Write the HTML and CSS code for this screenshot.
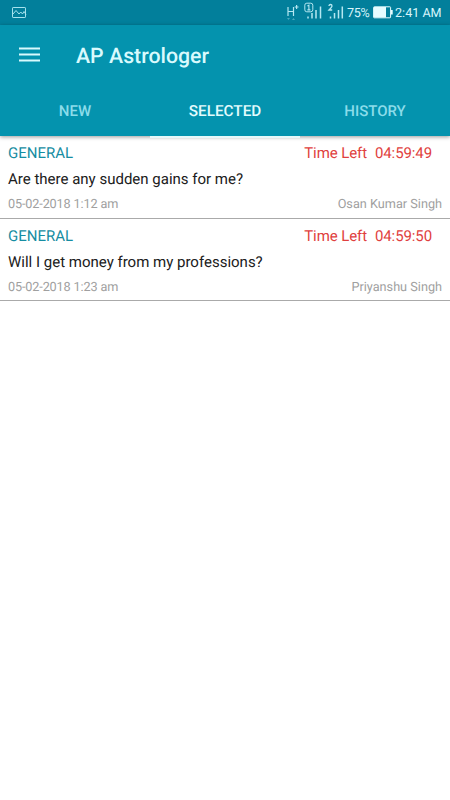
FILE: index.html
```html
<!DOCTYPE html>
<html lang="en">
<head>
<meta charset="utf-8">
<title>AP Astrologer</title>
<link rel="stylesheet" href="styles.css">
</head>
<body>
<div class="status">
  <svg class="photo" width="15" height="13" viewBox="0 0 15 13" fill="none" stroke="currentColor" stroke-width="1"><rect x=".5" y="1.500" width="13" height="10" rx=".6"/><path d="M1 8l3-3.500 3 3.500 1.800-2 1.700 2L12 5.500l2 3"/></svg>
  <svg class="signals" width="63" height="25" viewBox="0 0 63 25" fill="none" stroke="currentColor">
    <path d="M4 7v9M9.500 7v9M4 11.500h5.500M10.700 7h3.800M12.600 5.100v3.800" stroke-width="1.200"/>
    <path d="M3 18h3l-1.500 2zM8 20h3l-1.500-2z" fill="currentColor" stroke="none" opacity=".4"/>
    <rect x="20.800" y="3.200" width="8" height="8.600" rx="2"/>
    <path d="M23.400 6l1.500-.8v4.800M23.400 9.900h3" stroke-width="1.100"/>
    <path d="M24 16.500v2M28 13v5.500M32 10v8.500M36.500 6.500v12" stroke-width="1.500"/>
    <path d="M45 6q0-1.500 1.500-1.500T48 6q0 .8-3 4h3.200" stroke-width="1.300"/>
    <path d="M46.500 16.500v2M50.500 13v5.500M54.500 10v8.500M58.300 6.500v12" stroke-width="1.500"/>
  </svg>
  <span class="percent">75%</span>
  <svg class="battery" width="20" height="13" viewBox="0 0 20 13"><rect x=".6" y=".8" width="17" height="11" rx=".7" fill="none" stroke="currentColor"/><path d="M1 1h12v10.500H1zM18 4h1.700v4.600H18z" fill="currentColor"/></svg>
  <span class="clock">2:41 AM</span>
</div>
<header class="header">
  <div class="bar">
    <svg class="menu" width="21" height="16" viewBox="0 0 21 16"><path d="M0 1.500h21M0 7.500h21M0 13.500h21" stroke="currentColor" stroke-width="2.200"/></svg>
    <h1>AP Astrologer</h1>
  </div>
  <nav class="tabs"><span class="tab">NEW</span><span class="tab active">SELECTED</span><span class="tab">HISTORY</span></nav>
</header>
<main>
  <article class="item">
    <div class="row top"><span class="kind">GENERAL</span><span class="left"><span>Time Left</span><span>04:59:49</span></span></div>
    <p class="question">Are there any sudden gains for me?</p>
    <div class="row meta"><span class="date">05-02-2018 1:12 am</span><span>Osan Kumar Singh</span></div>
  </article>
  <article class="item">
    <div class="row top"><span class="kind">GENERAL</span><span class="left"><span>Time Left</span><span>04:59:50</span></span></div>
    <p class="question">Will I get money from my professions?</p>
    <div class="row meta"><span class="date">05-02-2018 1:23 am</span><span>Priyanshu Singh</span></div>
  </article>
</main>
</body>
</html>
```
FILE: styles.css
```css
* { box-sizing: border-box; }
body { margin: 0; height: 800px; overflow: hidden; background: #fff; font-family: Roboto, sans-serif; text-rendering: geometricPrecision; }
.status { height: 25px; display: flex; align-items: center; padding: 0 0 0 12px; background: #027f9b; color: #d8f5fb; font-size: 12.600px; white-space: nowrap; }
.status svg { flex: none; }
.photo { color: #a6e3ee; }
.signals { margin-left: 257px; color: #b5e7f1; }
.percent { width: 23px; margin-right: 3px; letter-spacing: -.3px; line-height: 25px; padding-top: 1px; }
.battery { margin-right: 2px; color: #e6fcff; }
.clock { line-height: 25px; padding-top: 1px; }
.header { height: 111px; position: relative; background: #0493ae; box-shadow: 0 1px 4px rgba(0,0,0,.4); }
.bar { height: 61px; display: flex; align-items: center; padding-left: 19px; color: #d9fafd; }
.menu { display: block; margin-top: -1px; }
h1 { margin: 0 0 0 36px; padding-top: 2px; font-size: 21.300px; line-height: 28px; font-weight: 500; }
.tabs { height: 50px; display: grid; grid-template-columns: repeat(3, 1fr); text-align: center; }
.tab { color: #8bdcea; font-size: 15px; line-height: 50px; font-weight: 500; }
.active { color: #e3fbfd; font-size: 15.300px; border-bottom: 2px solid #e6f8f9; }
.item { height: 82.500px; padding: 7px 8px 0; border-bottom: 1px solid #aaa; }
.row { display: flex; justify-content: space-between; }
.top { font-size: 15px; line-height: 20px; }
.kind { color: #168da2; }
.left { display: flex; gap: 8px; padding-right: 10px; color: #df3f40; letter-spacing: -.1px; }
.question { margin: 6px 0 0; font-size: 15px; line-height: 20px; color: #202020; }
.meta { margin-top: 7px; font-size: 12.700px; line-height: 18px; color: #a0a0a0; }
.date { letter-spacing: -.15px; }
```
